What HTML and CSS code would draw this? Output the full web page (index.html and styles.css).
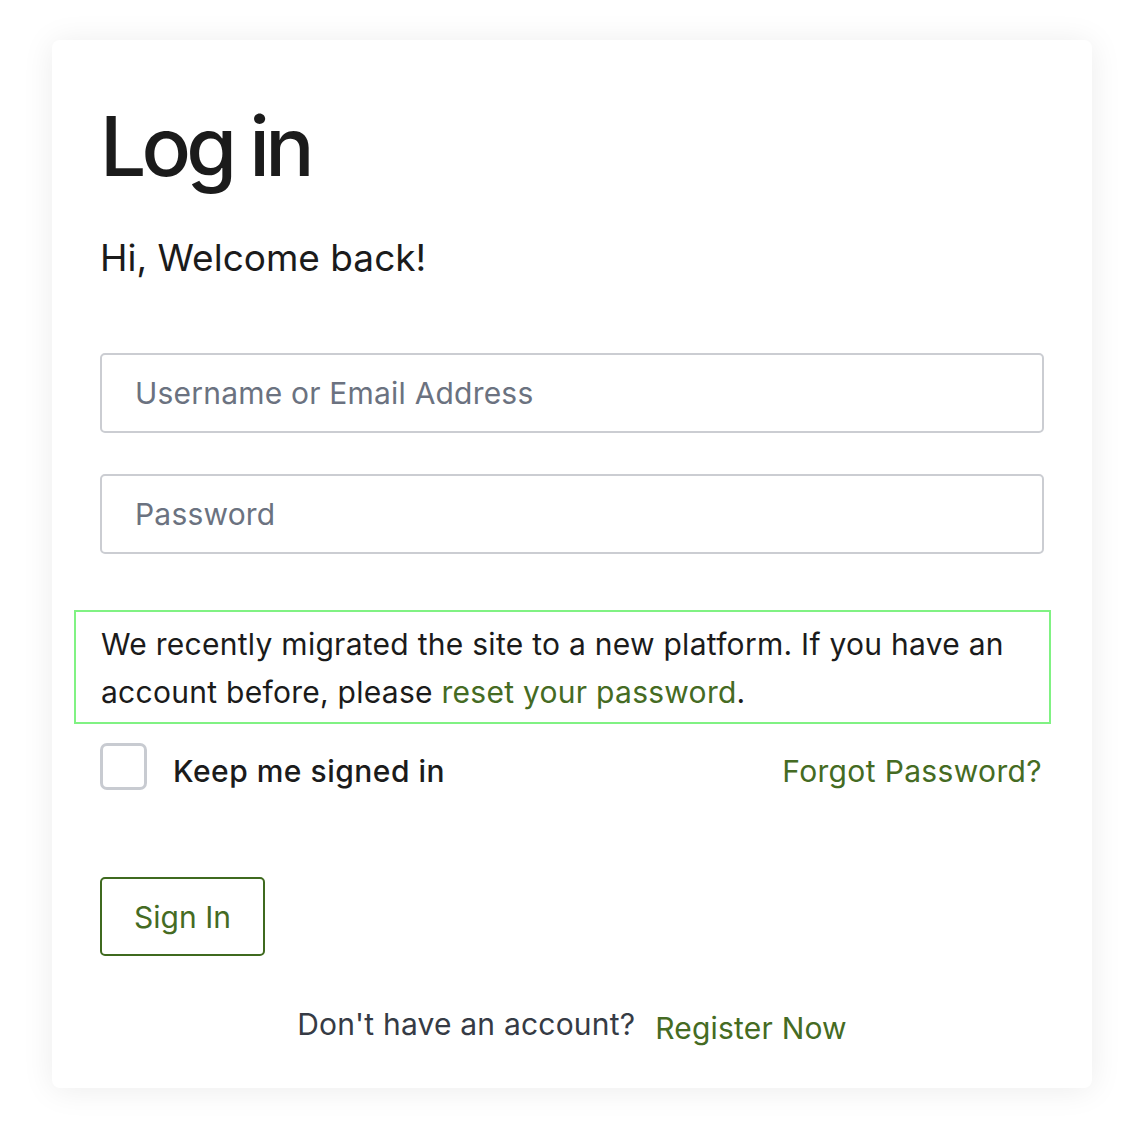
FILE: index.html
```html
<!DOCTYPE html>
<html lang="en">
<head>
<meta charset="utf-8">
<title>Log in</title>
<link rel="stylesheet" href="styles.css">
</head>
<body>
<main class="card">
  <h1 class="title">Log in</h1>
  <p class="welcome">Hi, Welcome back!</p>
  <form class="form">
    <input class="field" type="text" placeholder="Username or Email Address">
    <input class="field" type="password" placeholder="Password">
    <div class="notice">We recently migrated the site to a new platform. If you have an account before, please <a class="link" href="#">reset your password</a>.</div>
    <div class="options">
      <label class="remember"><span class="check"></span><span class="remember-text">Keep me signed in</span></label>
      <a class="link forgot" href="#">Forgot Password?</a>
    </div>
    <button class="submit" type="button">Sign In</button>
  </form>
  <div class="register">
    <span class="register-q">Don't have an account?</span>
    <a class="link register-link" href="#">Register Now</a>
  </div>
</main>
</body>
</html>
```
FILE: styles.css
```css
* { box-sizing: border-box; }
html, body { margin: 0; padding: 0; background: #ffffff; }
body {
  font-family: Inter, "Noto Sans", "Liberation Sans", sans-serif;
  color: #1b1b1b;
  padding: 40px 54px 38px 52px;
}
.card {
  width: 1040px;
  height: 1048px;
  background: #fff;
  border-radius: 8px;
  box-shadow: 0 2px 32px rgba(0, 0, 0, 0.08);
  padding: 57px 48px 0 48px;
}
.title {
  margin: 0;
  font-size: 82px;
  line-height: 100px;
  font-weight: 500;
  letter-spacing: -4.8px;
}
.welcome {
  margin: 39px 0 0;
  font-size: 37px;
  line-height: 44px;
  font-weight: 400;
}
.form {
  display: flex;
  flex-direction: column;
  margin-top: 73px;
}
.field {
  height: 80px;
  width: 944px;
  border: 2px solid #cbcdd2;
  border-radius: 5px;
  padding: 0 33px;
  font-family: inherit;
  font-size: 30px;
  letter-spacing: 0.2px;
  color: #1b1b1b;
  outline: none;
}
.field::placeholder { color: #6b7280; }
.field + .field { margin-top: 41px; }
.notice {
  margin: 56px -7px 0 -26px;
  border: 2px solid #80f283;
  padding: 8px 20px 6px 25px;
  font-size: 30px;
  line-height: 48px;
  letter-spacing: 0.27px;
}
.link { color: #456b23; text-decoration: none; }
.options {
  display: flex;
  align-items: center;
  justify-content: space-between;
  margin-top: 19px;
  height: 47px;
}
.remember { display: flex; align-items: center; }
.check {
  width: 47px;
  height: 47px;
  border: 3px solid #c8cbd1;
  border-radius: 7px;
}
.remember-text {
  margin-left: 26px;
  font-size: 30px;
  font-weight: 500;
  letter-spacing: 0.5px;
  padding-top: 8px;
}
.forgot {
  font-size: 30px;
  letter-spacing: 0.35px;
  padding-top: 8px;
  margin-right: 2px;
}
.submit {
  align-self: flex-start;
  margin-top: 87px;
  width: 165px;
  height: 79px;
  background: #fff;
  border: 2px solid #3f6a1f;
  border-radius: 5px;
  font-family: inherit;
  font-size: 30px;
  color: #456b23;
  padding: 0;
}
.register {
  display: flex;
  justify-content: center;
  align-items: flex-start;
  margin-top: 48px;
  font-size: 30px;
  line-height: 40px;
}
.register-q { color: #363b45; letter-spacing: 0.2px; }
.register-link { margin-left: 20px; padding-top: 4px; letter-spacing: 0.2px; }
```
